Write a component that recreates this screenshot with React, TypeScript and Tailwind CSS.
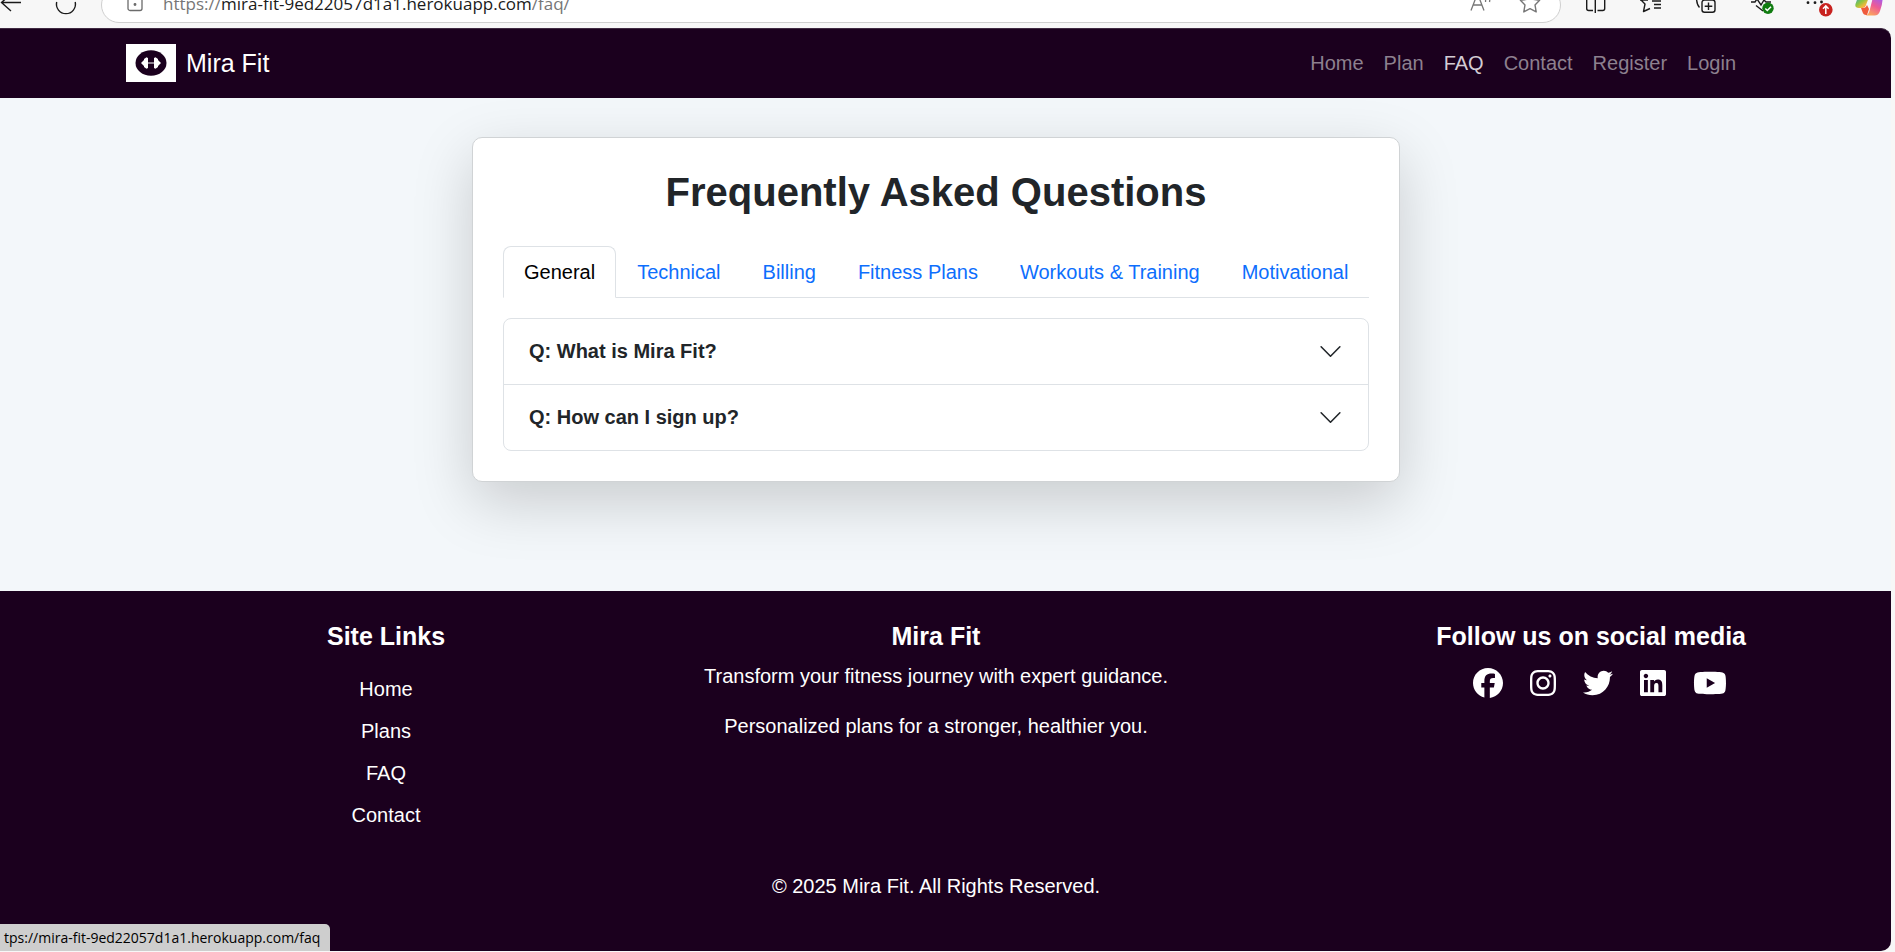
import { useState } from "react";
import type { ReactNode } from "react";
import { FaFacebook, FaInstagram, FaLinkedin, FaTwitter, FaYoutube } from "react-icons/fa6";

const navLinks = ["Home", "Plan", "FAQ", "Contact", "Register", "Login"];
const siteLinks = ["Home", "Plans", "FAQ", "Contact"];
const tabs = ["General", "Technical", "Billing", "Fitness Plans", "Workouts & Training", "Motivational"];
const questions = ["Q: What is Mira Fit?", "Q: How can I sign up?"];
const socials = [
  { name: "Facebook", Icon: FaFacebook, size: "h-[30px] w-[30px]" },
  { name: "Instagram", Icon: FaInstagram, size: "h-[30px] w-[26px]" },
  { name: "Twitter", Icon: FaTwitter, size: "h-[30px] w-[30px]" },
  { name: "LinkedIn", Icon: FaLinkedin, size: "h-[30px] w-[26px]" },
  { name: "YouTube", Icon: FaYoutube, size: "h-[30px] w-[34px]" },
];

function ToolButton({ label, children }: { label: string; children: ReactNode }) {
  return (
    <button type="button" aria-label={label} className="h-7 min-w-0 flex-1">
      <svg width="55" height="28" viewBox="0 0 55 28" fill="none" stroke="#1b1b1b" strokeWidth="1.4">
        {children}
      </svg>
    </button>
  );
}

function BrowserBar() {
  return (
    <div className="flex h-7 items-end overflow-hidden bg-[#f7f7f7]">
      <button type="button" aria-label="Back" className="h-7 w-[46px]">
        <svg width="46" height="28" viewBox="0 0 46 28" fill="none" stroke="#1b1b1b" strokeWidth="1.4">
          <path d="M21 2.500H2M11 -6L1.500 2.500L11 11" />
        </svg>
      </button>
      <button type="button" aria-label="Refresh" className="h-7 w-[55px]">
        <svg width="55" height="28" viewBox="0 0 55 28" fill="none" stroke="#1b1b1b" strokeWidth="1.4">
          <path d="M10.700 2a9.500 9.500 0 1 0 18.500 0" />
        </svg>
      </button>
      <div className="mb-[5px] flex h-9 min-w-0 flex-1 items-center rounded-full border border-[#cfcfcf] bg-white pr-[19px] pb-[2px] pl-[25px]">
        <svg width="16" height="20" viewBox="0 0 16 20" fill="none" stroke="#6b6b6b" strokeWidth="1.3">
          <rect x="1" y="4" width="14" height="12.500" rx="2" />
          <path d="M4.500 4V1M11.500 4V1" />
          <circle cx="8" cy="10.500" r="0.8" fill="#6b6b6b" />
        </svg>
        <p className="ml-5 min-w-0 flex-1 truncate font-['Open_Sans',sans-serif] text-[17px] leading-7 text-[#767676]">
          https://<span className="text-[#1b1b1b]">mira-fit-9ed22057d1a1.herokuapp.com</span>/faq/
        </p>
        <button type="button" aria-label="Read aloud">
          <svg width="22" height="24" viewBox="0 0 22 24" fill="none" stroke="#767676" strokeWidth="1.3">
            <path d="M2 18.500L8.500 1.500L15 18.500M4.500 13H12.500M15 5q2 2 1.500 5M18.500 3q3 3 2 7" />
          </svg>
        </button>
        <button type="button" aria-label="Add to favorites" className="ml-7">
          <svg width="22" height="24" viewBox="0 0 22 24" fill="none" stroke="#767676" strokeWidth="1.4" strokeLinejoin="round">
            <path d="M11 1l3.100 6.300 6.500 1-4.600 4.600 1.200 7-6.200-3.200-6.200 3.200 1.200-7-4.600-4.600 6.500-1z" />
          </svg>
        </button>
      </div>
      <div className="flex w-[334px] shrink-0 pl-[7px]">
        <ToolButton label="Split screen">
          <path d="M18.700 -2V8.500q0 2 2 2H25M29.500 10.500H34.700q2 0 2 -2V-2M27.300 -2V13" />
        </ToolButton>
        <ToolButton label="Favorites">
          <path d="M17 -1L22 4L20.500 11.500L27 8.500M17 0H25" strokeLinejoin="round" />
          <path d="M29 1H38M31 4.500H38M31 8H38" />
        </ToolButton>
        <ToolButton label="Collections">
          <rect x="25" y="0" width="13" height="12.300" rx="2.500" />
          <path d="M31.500 2.500V10M27.700 6.200H35.300M19.500 -1Q20 5 22.500 7.500" />
        </ToolButton>
        <ToolButton label="Browser essentials">
          <path d="M19 2H23L25 -1L29 5L32 0L34 2H39M24 5.500L31 11" />
          <circle cx="36" cy="8.300" r="5.700" fill="#107c10" stroke="none" />
          <path d="M33.300 8.500L35.300 10.500L39 6.700" stroke="#fff" strokeWidth="1.500" />
        </ToolButton>
        <ToolButton label="Settings and more">
          <g fill="#1b1b1b" stroke="none">
            <circle cx="22" cy="2.700" r="1.400" />
            <circle cx="29" cy="2.700" r="1.400" />
            <circle cx="35.500" cy="2" r="1.400" />
          </g>
          <circle cx="39.800" cy="9.700" r="6.800" fill="#c8221f" stroke="none" />
          <path d="M39.800 14V6M37 8.700L39.800 5.900L42.600 8.700" stroke="#fff" strokeWidth="1.500" />
        </ToolButton>
        <ToolButton label="Copilot">
          <defs>
            <linearGradient id="cpLeft" x1="0" y1="0" x2="0.900" y2="1">
              <stop offset="0" stopColor="#2f9fd0" />
              <stop offset="0.450" stopColor="#8cc63f" />
              <stop offset="0.750" stopColor="#f5b83d" />
              <stop offset="1" stopColor="#f0632f" />
            </linearGradient>
            <linearGradient id="cpRight" x1="0.800" y1="0" x2="0.300" y2="1">
              <stop offset="0" stopColor="#a35bf0" />
              <stop offset="0.500" stopColor="#ee5a94" />
              <stop offset="1" stopColor="#fba75c" />
            </linearGradient>
          </defs>
          <g transform="translate(2 0)">
            <path d="M15 -3H26L23 5Q22 8 19 8H16Q11.500 8 12.500 4Z" fill="url(#cpLeft)" stroke="none" />
            <path d="M18 8H21Q23 8 24 5L26 9L24 15Q20.500 15.500 19.500 12Z" fill="#ef5a3c" stroke="none" />
            <path d="M30 -3H39.500Q40 3 37 11Q35.500 15.500 31.500 15.500H23Q25.500 14.500 26.500 11Z" fill="url(#cpRight)" stroke="none" />
          </g>
        </ToolButton>
      </div>
    </div>
  );
}

function Navbar() {
  return (
    <header className="flex min-h-[70px] items-center justify-between rounded-tr-[10px] border-t border-[#3f2a42] bg-[#1b001e] pr-[155px] pb-[2px] pl-[126px]">
      <a href="#" className="flex items-center gap-[10px] text-[25px] text-white">
        <svg width="50" height="38" viewBox="0 0 50 38">
          <rect width="50" height="38" fill="#fff" />
          <ellipse cx="25" cy="19" rx="15.500" ry="12.700" fill="#1b001e" />
          <path
            d="M15 19L18 16V15L20.500 13.300L22 14V18.400H28V14L29.500 13.300L32 15V16L35 19L32 22V23L29.500 24.700L28 24V19.600H22V24L20.500 24.700L18 23V22Z"
            fill="#fff"
          />
        </svg>
        Mira Fit
      </a>
      <nav className="flex gap-5">
        {navLinks.map((link) => (
          <a key={link} href="#" className={link === "FAQ" ? "text-[#d3ccd4]" : "text-[#8d808f]"}>
            {link}
          </a>
        ))}
      </nav>
    </header>
  );
}

function Faq() {
  const [active, setActive] = useState("General");
  return (
    <main className="bg-[#f3f7fa] pt-[39px] pr-[19px] pb-[109px]">
      <section className="mx-auto w-full max-w-[928px] rounded-[10px] border border-[#d0d3d5] bg-white p-[30px] shadow-[0_20px_60px_rgba(0,0,0,0.175)]">
        <h1 className="mb-[30px] text-center text-[40px] leading-[48px] font-bold">Frequently Asked Questions</h1>
        <div role="tablist" className="mb-5 flex border-b border-[#dee2e6]">
          {tabs.map((tab) => (
            <button
              key={tab}
              type="button"
              role="tab"
              aria-selected={tab === active}
              onClick={() => setActive(tab)}
              className={
                tab === active
                  ? "-mb-px rounded-t-[8px] border border-[#dee2e6] border-b-white bg-white px-5 py-[10px] whitespace-nowrap text-black"
                  : "-mb-px rounded-t-[8px] border border-transparent px-5 py-[10px] whitespace-nowrap text-[#0d6efd]"
              }
            >
              {tab}
            </button>
          ))}
        </div>
        <div className="divide-y divide-[#dee2e6] rounded-[8px] border border-[#dee2e6]">
          {questions.map((q) => (
            <h2 key={q}>
              <button
                type="button"
                aria-expanded={false}
                className="flex w-full items-center justify-between px-[25px] py-5 text-left leading-[25px] font-bold"
              >
                {q}
                <svg width="25" height="25" viewBox="0 0 16 16" fill="none" stroke="#212529" strokeLinecap="round" strokeLinejoin="round">
                  <path d="m2 5 6 6 6-6" />
                </svg>
              </button>
            </h2>
          ))}
        </div>
      </section>
    </main>
  );
}

function Footer() {
  return (
    <footer className="rounded-br-[10px] bg-[#1b001e] pt-[30px] pr-[145px] pb-[50px] pl-[126px] text-center text-white">
      <div className="grid grid-cols-3">
        <div className="pr-5">
          <h2 className="mb-[23px] text-[25px] leading-[30px] font-bold">Site Links</h2>
          <ul className="flex flex-col gap-3">
            {siteLinks.map((link) => (
              <li key={link}>
                <a href="#">{link}</a>
              </li>
            ))}
          </ul>
        </div>
        <div>
          <h2 className="mb-[10px] text-[25px] leading-[30px] font-bold">Mira Fit</h2>
          <p className="mb-5">Transform your fitness journey with expert guidance.</p>
          <p>Personalized plans for a stronger, healthier you.</p>
        </div>
        <div className="justify-self-end">
          <h2 className="mb-[17px] text-[25px] leading-[30px] font-bold">Follow us on social media</h2>
          <div className="flex justify-center gap-[27px] pl-[18px]">
            {socials.map(({ name, Icon, size }) => (
              <a key={name} href="#" aria-label={name}>
                <Icon className={size} />
              </a>
            ))}
          </div>
        </div>
      </div>
      <p className="mt-[41px]">© 2025 Mira Fit. All Rights Reserved.</p>
    </footer>
  );
}

export default function App() {
  return (
    <div className="min-h-screen bg-[#f7f7f7] font-['Liberation_Sans',Arial,sans-serif] text-[20px] leading-[30px] text-[#212529]">
      <BrowserBar />
      <div className="relative mr-1">
        <Navbar />
        <Faq />
        <Footer />
        <div className="absolute bottom-0 left-0 rounded-tr-[5px] bg-[#cecece] pr-[10px] pl-1 font-['Open_Sans',sans-serif] text-[14px] leading-[27px] whitespace-nowrap text-black">
          tps://mira-fit-9ed22057d1a1.herokuapp.com/faq
        </div>
      </div>
    </div>
  );
}
